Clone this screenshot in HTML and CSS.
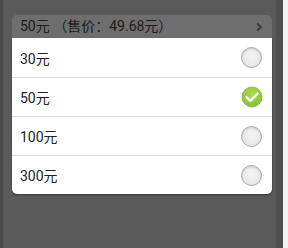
FILE: index.html
```html
<!DOCTYPE html>
<html lang="zh-CN">
<head>
    <meta charset="UTF-8">
    <meta name="viewport" content="width=device-width, initial-scale=1.0">
    <title>选择面值</title>
    <link rel="stylesheet" href="styles.css">
</head>
<body>
    <div class="screen">
        <div class="edge-left"></div>
        <div class="page">
            <div class="select-bar">
                <span>50元 （售价：49.68元）</span>
                <svg class="chevron" width="8" height="10" viewBox="0 0 8 10">
                    <path d="M2 1.5 L6 5 L2 8.5" fill="none" stroke="#3a3a3a" stroke-width="1.8"/>
                </svg>
            </div>
            <div class="dialog">
                <div class="option">
                    <span>30元</span>
                    <span class="radio"></span>
                </div>
                <div class="option">
                    <span>50元</span>
                    <svg class="radio-on" width="22" height="22" viewBox="0 0 22 22">
                        <defs>
                            <radialGradient id="g" cx="50%" cy="35%" r="60%">
                                <stop offset="0" stop-color="#b0dc5a"/>
                                <stop offset="1" stop-color="#86c232"/>
                            </radialGradient>
                        </defs>
                        <circle cx="11" cy="11" r="10" fill="url(#g)" stroke="#8fbf4a" stroke-width="1"/>
                        <path d="M5.5 11.2 L9.3 14.8 L16.5 7.6" fill="none" stroke="#fff" stroke-width="2.4" stroke-linecap="round" stroke-linejoin="round"/>
                    </svg>
                </div>
                <div class="option">
                    <span>100元</span>
                    <span class="radio"></span>
                </div>
                <div class="option">
                    <span>300元</span>
                    <span class="radio"></span>
                </div>
            </div>
        </div>
        <div class="edge-right"></div>
    </div>
</body>
</html>
```

FILE: styles.css
```css
body {
    margin: 0;
    width: 288px;
    height: 248px;
    overflow: hidden;
    font-family: Roboto, "Noto Sans CJK SC", sans-serif;
}

.screen {
    display: flex;
    height: 248px;
    background-color: #5a5a5a;
}

.edge-left {
    width: 3px;
    background-color: #4a4a4a;
}

.edge-right {
    width: 12px;
    border-left: 7px solid #4f4f4f;
    background-color: #f2f2f2;
    box-sizing: border-box;
}

.page {
    flex: 1;
    padding: 15px 4px 0 9px;
}

.select-bar {
    display: flex;
    align-items: center;
    justify-content: space-between;
    height: 21px;
    padding: 0 9px 2px 8px;
    background-color: #6e6e6e;
    border-radius: 5px 5px 0 0;
    color: #1c1c1c;
    font-size: 14px;
    line-height: 18px;
}

.chevron {
    margin-top: 2px;
}

.dialog {
    background-color: #fff;
    border-radius: 0 0 5px 5px;
    box-shadow: 0 1px 2px rgba(0, 0, 0, 0.4);
}

.option {
    display: flex;
    align-items: center;
    justify-content: space-between;
    height: 38px;
    padding: 0 10px 0 8px;
    border-top: 1px solid #dcdcdc;
    color: #222;
    font-size: 14px;
}

.option:first-child {
    border-top: none;
    height: 39px;
}

.radio {
    width: 19px;
    height: 19px;
    border-radius: 50%;
    border: 1px solid #a8a8a8;
    background: radial-gradient(circle at 50% 40%, #f4f4f4, #e2e2e2);
    box-shadow: inset 0 1px 2px rgba(0, 0, 0, 0.15);
}

.radio-on {
    margin-right: -1px;
}
```
